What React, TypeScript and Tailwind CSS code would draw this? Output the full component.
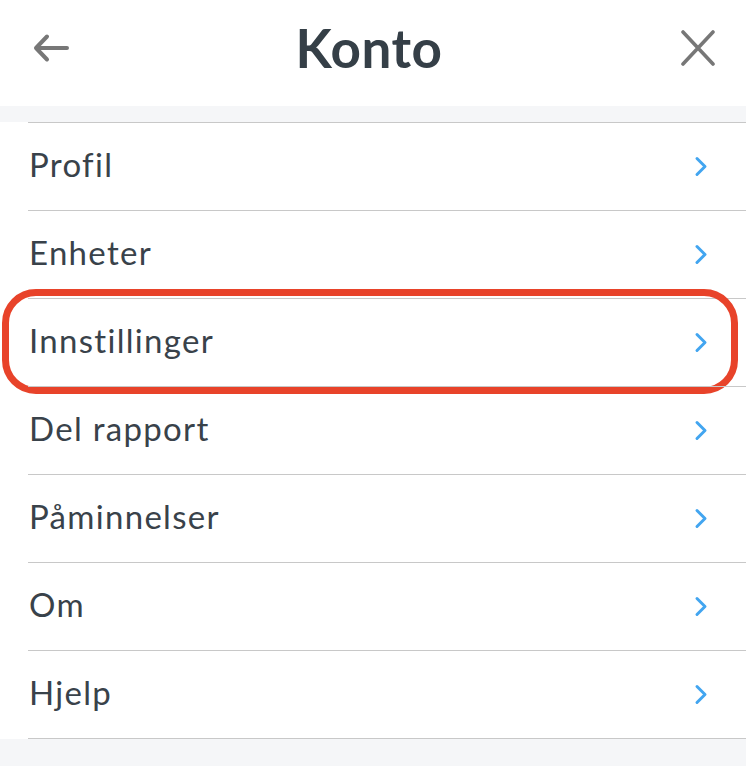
import React from "react";

const items = ["Profil", "Enheter", "Innstillinger", "Del rapport", "Påminnelser", "Om", "Hjelp"];

function Chevron() {
  return (
    <svg width="14" height="21" viewBox="0 0 14 21" fill="none">
      <path d="M3 2.5 L11 10.5 L3 18.5" stroke="#42a5f0" strokeWidth="3" strokeLinecap="round" strokeLinejoin="round" />
    </svg>
  );
}

export default function App() {
  return (
    <div className="w-[746px] h-[766px] bg-[#f5f6f8] overflow-hidden" style={{ fontFamily: "Lato, 'Noto Sans', sans-serif" }}>
      <div className="h-[106px] bg-white grid grid-cols-[1fr_auto_1fr] items-center px-[33px]">
        <svg width="38" height="30" viewBox="0 0 38 30" fill="none" className="mt-[-10px]">
          <path d="M4 15 H34 M14 3.5 L3 15 L14 26.5" stroke="#777777" strokeWidth="4" strokeLinecap="round" strokeLinejoin="round" />
        </svg>
        <div className="text-[53px] font-bold text-[#353f47] leading-none mt-[-12px] mr-[8px] tracking-[0.5px]">Konto</div>
        <div className="flex justify-end">
          <svg width="36" height="36" viewBox="0 0 36 36" fill="none" className="mt-[-10px] mr-[-3px]">
            <path d="M3 2 L33 34 M33 2 L3 34" stroke="#777777" strokeWidth="3.6" strokeLinecap="round" />
          </svg>
        </div>
      </div>
      <div className="h-[16px]" />
      <div className="bg-white">
        {items.map((label) => (
          <div key={label} className="relative pl-[28px]">
            <div className="h-[88px] border-t border-[#c8c8c8] flex items-center justify-between pr-[38px]">
              <span className="text-[33px] text-[#39424a] ml-[1px] mt-[-4px] tracking-[1.3px]">{label}</span>
              <Chevron />
            </div>
            {label === "Innstillinger" && (
              <div className="absolute left-[2px] w-[736px] top-[-9px] h-[105px] border-[7px] border-[#e8432a] rounded-[34px] pointer-events-none" />
            )}
          </div>
        ))}
        <div className="ml-[28px] border-t border-[#c8c8c8]" />
      </div>
    </div>
  );
}
